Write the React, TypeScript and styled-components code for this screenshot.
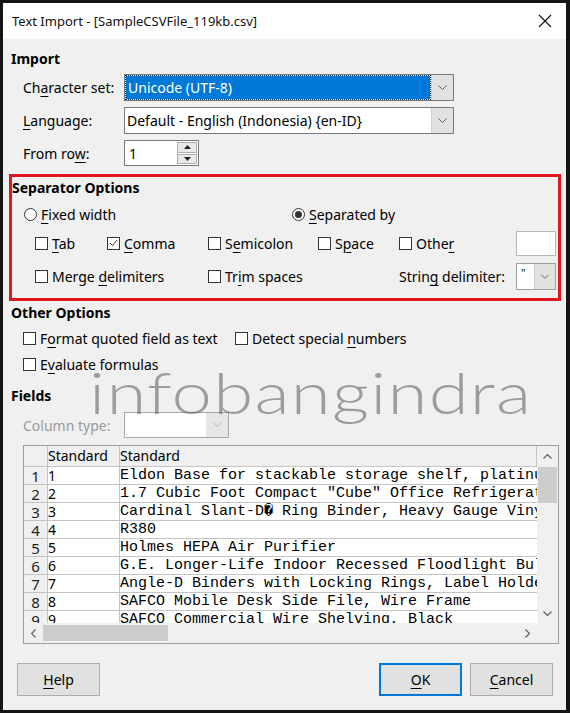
import React from "react";
import styled, { createGlobalStyle } from "styled-components";

const Global = createGlobalStyle`
  html, body { margin: 0; padding: 0; background: #111; }
  #root { width: 570px; height: 713px; }
`;

const Window = styled.div`
  position: relative;
  width: 570px;
  height: 713px;
  box-sizing: border-box;
  border-style: solid;
  border-color: #151515;
  border-width: 3px 4px 3px 3px;
  background: #f0f0f0;
  display: flex;
  flex-direction: column;
  overflow: hidden;
  font-family: "Noto Sans", "Open Sans", sans-serif;
  font-size: 14px;
  color: #000;
`;

const TitleBar = styled.div`
  flex: none;
  height: 36px;
  background: #fff;
  display: flex;
  align-items: center;
  justify-content: space-between;
  padding: 0 14px 0 9px;
`;

const TitleText = styled.span`
  font-size: 13px;
  color: #111;
`;

const Body = styled.div`
  flex: 1;
  display: flex;
  flex-direction: column;
  padding-left: 8px;
`;

const Heading = styled.div<{ $mt: number }>`
  margin-top: ${(p) => p.$mt}px;
  height: 20px;
  line-height: 20px;
  font-weight: 700;
  font-size: 14px;
`;

const Acc = styled.span`
  text-decoration: underline;
  text-decoration-thickness: 1px;
  text-underline-offset: 3px;
`;

const FormRow = styled.div<{ $mt: number; $h: number }>`
  margin-top: ${(p) => p.$mt}px;
  height: ${(p) => p.$h}px;
  display: grid;
  grid-template-columns: 101px auto;
  align-items: center;
  padding-left: 12px;
`;

const Label = styled.span<{ $disabled?: boolean }>`
  color: ${(p) => (p.$disabled ? "#9a9a9a" : "#000")};
  white-space: nowrap;
`;

const Select = styled.div<{ $w: number; $h: number; $disabled?: boolean }>`
  width: ${(p) => p.$w}px;
  height: ${(p) => p.$h}px;
  box-sizing: border-box;
  border: 1px solid ${(p) => (p.$disabled ? "#a8a8a8" : "#7a7a7a")};
  background: #fff;
  display: flex;
`;

const SelectValue = styled.div<{ $hl?: boolean }>`
  flex: 1;
  display: flex;
  align-items: center;
  padding-left: 2px;
  margin: ${(p) => (p.$hl ? "1px" : "0")};
  background: ${(p) => (p.$hl ? "#0078d7" : "transparent")};
  color: ${(p) => (p.$hl ? "#fff" : "#000")};
  outline: ${(p) => (p.$hl ? "1px dotted #0b2a4a" : "none")};
  white-space: nowrap;
  overflow: hidden;
`;

const DropPart = styled.div<{ $w: number; $disabled?: boolean }>`
  flex: none;
  width: ${(p) => p.$w}px;
  background: ${(p) => (p.$disabled ? "#e6e6e6" : "#e1e1e1")};
  border-left: 1px solid ${(p) => (p.$disabled ? "#e6e6e6" : "#d0d0d0")};
  display: flex;
  align-items: center;
  justify-content: center;
`;

const Chevron = ({ color = "#606060", w = 9 }: { color?: string; w?: number }) => (
  <svg width={w} height={6} viewBox="0 0 9 6">
    <polyline points="0.5,0.5 4.5,4.5 8.5,0.5" fill="none" stroke={color} strokeWidth={1} />
  </svg>
);

const Spin = styled.div`
  width: 75px;
  height: 26px;
  box-sizing: border-box;
  border: 1px solid #7a7a7a;
  background: #fff;
  display: flex;
`;

const SpinValue = styled.div`
  flex: 1;
  display: flex;
  align-items: center;
  padding-left: 4px;
`;

const SpinButtons = styled.div`
  width: 20px;
  display: flex;
  flex-direction: column;
  gap: 1px;
  padding: 1px;
`;

const SpinBtn = styled.div`
  flex: 1;
  background: #e8e8e8;
  border: 1px solid #adadad;
  display: flex;
  align-items: center;
  justify-content: center;
`;

const Tri = ({ up }: { up?: boolean }) => (
  <svg width={7} height={4} viewBox="0 0 7 4">
    <polygon points={up ? "0,4 3.5,0 7,4" : "0,0 7,0 3.5,4"} fill="#222" />
  </svg>
);

const SepBox = styled.div`
  margin-top: 8px;
  margin-left: -2px;
  width: 552px;
  height: 127px;
  box-sizing: border-box;
  border: 3px solid #e3161f;
  display: flex;
  flex-direction: column;
`;

const OptRow = styled.div<{ $mt: number; $h: number; $cols: string; $pl: number }>`
  margin-top: ${(p) => p.$mt}px;
  height: ${(p) => p.$h}px;
  display: grid;
  grid-template-columns: ${(p) => p.$cols};
  padding-left: ${(p) => p.$pl}px;
  padding-right: 2px;
  align-items: center;
`;

const Option = styled.label`
  display: flex;
  align-items: center;
  gap: 4px;
  white-space: nowrap;
`;

const Box = styled.span`
  flex: none;
  width: 13px;
  height: 13px;
  box-sizing: border-box;
  border: 1px solid #333;
  background: #fff;
  display: flex;
  align-items: center;
  justify-content: center;
`;

const Round = styled.span<{ $on?: boolean }>`
  flex: none;
  width: 13px;
  height: 13px;
  box-sizing: border-box;
  border-radius: 50%;
  border: 1px solid #333;
  background: #fff;
  display: flex;
  align-items: center;
  justify-content: center;
  &::after {
    content: "";
    width: 7px;
    height: 7px;
    border-radius: 50%;
    background: ${(p) => (p.$on ? "#333" : "transparent")};
  }
`;

const Check = () => (
  <svg width={9} height={8} viewBox="0 0 9 8">
    <polyline points="1,4 3.5,6.5 8,1" fill="none" stroke="#333" strokeWidth={1} />
  </svg>
);

const CheckBox = ({ checked, children }: { checked?: boolean; children: React.ReactNode }) => (
  <Option>
    <Box>{checked ? <Check /> : null}</Box>
    <span>{children}</span>
  </Option>
);

const Radio = ({ on, children }: { on?: boolean; children: React.ReactNode }) => (
  <Option>
    <Round $on={on} />
    <span>{children}</span>
  </Option>
);

const SmallInput = styled.div`
  width: 40px;
  height: 25px;
  box-sizing: border-box;
  border: 1px solid #b5b5b5;
  background: #fff;
`;

const SmallSelect = styled.div`
  width: 40px;
  height: 27px;
  box-sizing: border-box;
  border: 1px solid #a0a0a0;
  background: #fff;
  display: flex;
`;

const Quote = styled.span`
  width: 18px;
  padding: 3px 0 0 4px;
  font-size: 11px;
  line-height: 12px;
`;

const TableFrame = styled.div`
  margin-top: 7px;
  margin-left: 12px;
  width: 536px;
  height: 199px;
  box-sizing: border-box;
  border: 1px solid #a0a0a0;
  background: #fff;
  display: grid;
  grid-template-columns: 1fr 21px;
  grid-template-rows: 1fr 20px;
`;

const DataGrid = styled.div`
  overflow: hidden;
  display: grid;
  grid-template-columns: 24px 72px 1fr;
  grid-template-rows: 21px;
  grid-auto-rows: 18px;
  align-content: start;
`;

const Cell = styled.div<{ $kind: "head" | "num" | "id" | "text" }>`
  box-sizing: border-box;
  border-bottom: 1px solid #c4c4c4;
  border-right: ${(p) => (p.$kind === "text" ? "none" : "1px solid #c4c4c4")};
  background: ${(p) => (p.$kind === "head" || p.$kind === "num" ? "#f0f0f0" : "#fff")};
  overflow: hidden;
  white-space: nowrap;
  display: flex;
  align-items: ${(p) => (p.$kind === "num" ? "flex-end" : "center")};
  justify-content: ${(p) => (p.$kind === "num" ? "center" : "flex-start")};
  font-family: ${(p) =>
    p.$kind === "text" ? `"Liberation Mono", "Cousine", monospace` : `"Noto Sans", sans-serif`};
  font-size: ${(p) => (p.$kind === "num" ? "15px" : p.$kind === "text" ? "15px" : "14px")};
  line-height: ${(p) => (p.$kind === "num" ? "15px" : "18px")};
  color: ${(p) => (p.$kind === "num" ? "#222" : "#000")};
`;

const VScroll = styled.div`
  background: #f0f0f0;
  display: flex;
  flex-direction: column;
`;

const HScroll = styled.div`
  background: #f0f0f0;
  display: flex;
  align-items: center;
`;

const Corner = styled.div`
  background: #f0f0f0;
`;

const ArrowCell = styled.div<{ $size: number }>`
  flex: none;
  width: ${(p) => p.$size}px;
  height: ${(p) => p.$size}px;
  display: flex;
  align-items: center;
  justify-content: center;
`;

const Track = styled.div<{ $vertical?: boolean }>`
  flex: 1;
  display: flex;
  flex-direction: ${(p) => (p.$vertical ? "column" : "row")};
  align-self: stretch;
  align-items: center;
`;

const Thumb = styled.div<{ $vertical?: boolean }>`
  background: #cdcdcd;
  ${(p) =>
    p.$vertical
      ? "width: 19px; height: 36px; margin-top: 1px;"
      : "width: 125px; height: 16px;"}
`;

const Arrow = ({ dir }: { dir: "up" | "down" | "left" | "right" }) => {
  const pts: Record<string, string> = {
    up: "0.5,4.5 4.5,0.5 8.5,4.5",
    down: "0.5,0.5 4.5,4.5 8.5,0.5",
    left: "4.5,0.5 0.5,4.5 4.5,8.5",
    right: "0.5,0.5 4.5,4.5 0.5,8.5",
  };
  const vert = dir === "up" || dir === "down";
  return (
    <svg width={vert ? 9 : 5} height={vert ? 5 : 9} viewBox={vert ? "0 0 9 5" : "0 0 5 9"}>
      <polyline points={pts[dir]} fill="none" stroke="#606060" strokeWidth={1.2} />
    </svg>
  );
};

const ButtonRow = styled.div`
  margin-top: 19px;
  display: flex;
  justify-content: space-between;
  padding: 0 13px 0 6px;
`;

const ButtonGroup = styled.div`
  display: flex;
  gap: 8px;
`;

const Button = styled.button<{ $primary?: boolean }>`
  width: 83px;
  height: 33px;
  box-sizing: border-box;
  background: #e1e1e1;
  border: ${(p) => (p.$primary ? "2px solid #0078d7" : "1px solid #adadad")};
  font-family: "Noto Sans", sans-serif;
  font-size: 14px;
  color: #000;
  padding: 0;
`;

const Watermark = styled.div`
  position: absolute;
  left: 86px;
  top: 360px;
  font-family: Lato, sans-serif;
  font-weight: 300;
  font-size: 58px;
  line-height: 58px;
  letter-spacing: 1px;
  transform: scaleX(1.25);
  transform-origin: left center;
  color: rgba(100, 100, 100, 0.6);
  pointer-events: none;
  white-space: nowrap;
`;

const rows: [string, string][] = [
  ["1", "Eldon Base for stackable storage shelf, platinum"],
  ["2", '1.7 Cubic Foot Compact "Cube" Office Refrigerators'],
  ["3", "Cardinal Slant-D\uFFFD Ring Binder, Heavy Gauge Vinyl"],
  ["4", "R380"],
  ["5", "Holmes HEPA Air Purifier"],
  ["6", "G.E. Longer-Life Indoor Recessed Floodlight Bulbs"],
  ["7", "Angle-D Binders with Locking Rings, Label Holders"],
  ["8", "SAFCO Mobile Desk Side File, Wire Frame"],
  ["9", "SAFCO Commercial Wire Shelving, Black"],
];

export default function App() {
  return (
    <>
      <Global />
      <Window>
        <TitleBar>
          <TitleText>Text Import - [SampleCSVFile_119kb.csv]</TitleText>
          <svg width={14} height={14} viewBox="0 0 14 14">
            <path d="M1 1 L13 13 M13 1 L1 13" stroke="#111" strokeWidth={1.1} />
          </svg>
        </TitleBar>
        <Body>
          <Heading $mt={10}>Import</Heading>
          <FormRow $mt={5} $h={27}>
            <Label>
              Ch<Acc>a</Acc>racter set:
            </Label>
            <Select $w={330} $h={27}>
              <SelectValue $hl>Unicode (UTF-8)</SelectValue>
              <DropPart $w={21}>
                <Chevron />
              </DropPart>
            </Select>
          </FormRow>
          <FormRow $mt={6} $h={27}>
            <Label>
              <Acc>L</Acc>anguage:
            </Label>
            <Select $w={330} $h={27}>
              <SelectValue>Default - English (Indonesia) {"{en-ID}"}</SelectValue>
              <DropPart $w={21}>
                <Chevron />
              </DropPart>
            </Select>
          </FormRow>
          <FormRow $mt={6} $h={26}>
            <Label>
              From ro<Acc>w</Acc>:
            </Label>
            <Spin>
              <SpinValue>1</SpinValue>
              <SpinButtons>
                <SpinBtn>
                  <Tri up />
                </SpinBtn>
                <SpinBtn>
                  <Tri />
                </SpinBtn>
              </SpinButtons>
            </Spin>
          </FormRow>

          <SepBox>
            <Heading $mt={1}>Separator Options</Heading>
            <OptRow $mt={6} $h={20} $cols="268px 1fr" $pl={12}>
              <Radio>
                <Acc>F</Acc>ixed width
              </Radio>
              <Radio on>
                <Acc>S</Acc>eparated by
              </Radio>
            </OptRow>
            <OptRow $mt={6} $h={26} $cols="72px 101px 110px 81px 1fr 40px" $pl={23}>
              <CheckBox>
                <Acc>T</Acc>ab
              </CheckBox>
              <CheckBox checked>
                <Acc>C</Acc>omma
              </CheckBox>
              <CheckBox>
                S<Acc>e</Acc>micolon
              </CheckBox>
              <CheckBox>
                S<Acc>p</Acc>ace
              </CheckBox>
              <CheckBox>
                Othe<Acc>r</Acc>
              </CheckBox>
              <SmallInput />
            </OptRow>
            <OptRow $mt={7} $h={26} $cols="173px 191px 1fr 40px" $pl={23}>
              <CheckBox>
                Merge <Acc>d</Acc>elimiters
              </CheckBox>
              <CheckBox>
                Tr<Acc>i</Acc>m spaces
              </CheckBox>
              <Label>
                Strin<Acc>g</Acc> delimiter:
              </Label>
              <SmallSelect>
                <Quote>"</Quote>
                <DropPart $w={20}>
                  <Chevron w={8} />
                </DropPart>
              </SmallSelect>
            </OptRow>
          </SepBox>

          <Heading $mt={2}>Other Options</Heading>
          <OptRow $mt={5} $h={20} $cols="212px 1fr" $pl={12}>
            <CheckBox>
              F<Acc>o</Acc>rmat quoted field as text
            </CheckBox>
            <CheckBox>
              Detect special <Acc>n</Acc>umbers
            </CheckBox>
          </OptRow>
          <OptRow $mt={6} $h={20} $cols="1fr" $pl={12}>
            <CheckBox>
              E<Acc>v</Acc>aluate formulas
            </CheckBox>
          </OptRow>

          <Heading $mt={12}>Fields</Heading>
          <FormRow $mt={6} $h={26}>
            <Label $disabled>Column type:</Label>
            <Select $w={105} $h={26} $disabled>
              <SelectValue />
              <DropPart $w={21} $disabled>
                <Chevron color="#b8b8b8" />
              </DropPart>
            </Select>
          </FormRow>

          <TableFrame>
            <DataGrid>
              <Cell $kind="head" />
              <Cell $kind="head">Standard</Cell>
              <Cell $kind="head">Standard</Cell>
              {rows.map(([id, text]) => (
                <React.Fragment key={id}>
                  <Cell $kind="num">{id}</Cell>
                  <Cell $kind="id">{id}</Cell>
                  <Cell $kind="text">{text}</Cell>
                </React.Fragment>
              ))}
            </DataGrid>
            <VScroll>
              <ArrowCell $size={20}>
                <Arrow dir="up" />
              </ArrowCell>
              <Track $vertical>
                <Thumb $vertical />
              </Track>
              <ArrowCell $size={20}>
                <Arrow dir="down" />
              </ArrowCell>
            </VScroll>
            <HScroll>
              <ArrowCell $size={19}>
                <Arrow dir="left" />
              </ArrowCell>
              <Track>
                <Thumb />
              </Track>
              <ArrowCell $size={20}>
                <Arrow dir="right" />
              </ArrowCell>
            </HScroll>
            <Corner />
          </TableFrame>

          <ButtonRow>
            <Button>
              <Acc>H</Acc>elp
            </Button>
            <ButtonGroup>
              <Button $primary>
                <Acc>O</Acc>K
              </Button>
              <Button>
                <Acc>C</Acc>ancel
              </Button>
            </ButtonGroup>
          </ButtonRow>
        </Body>
        <Watermark>infobangindra</Watermark>
      </Window>
    </>
  );
}
